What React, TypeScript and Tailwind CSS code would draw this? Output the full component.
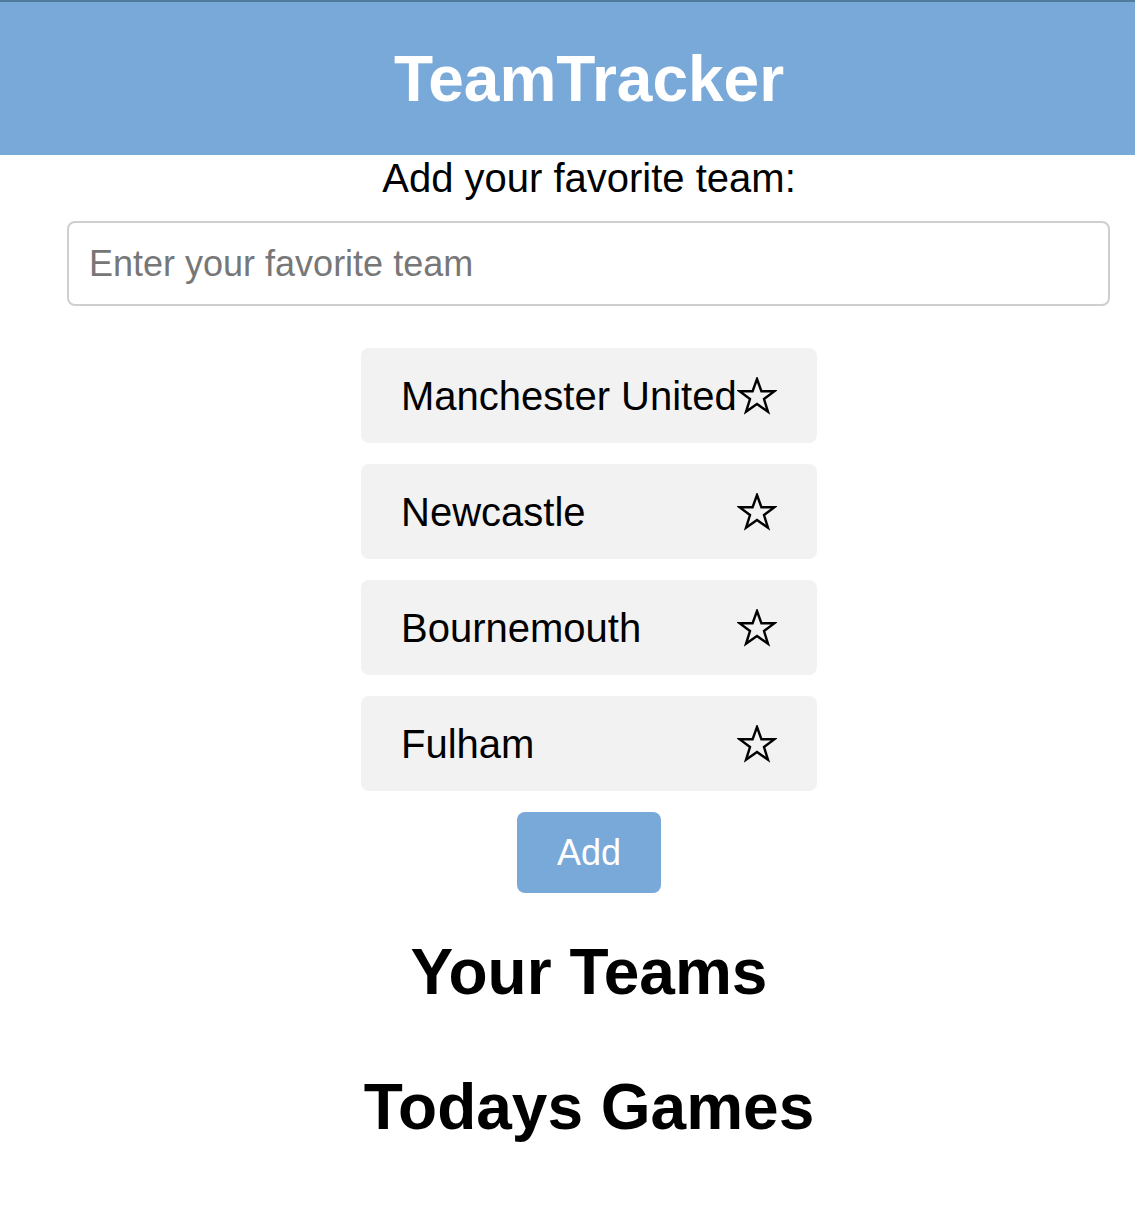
const teams = ['Manchester United', 'Newcastle', 'Bournemouth', 'Fulham'];

const StarIcon = () => (
  <svg width="40" height="38" viewBox="0 0 40 38" className="shrink-0">
    <polygon
      points="20,2 24.4,14.2 37.5,14.2 27,22 31,34.8 20,27 9,34.8 13,22 2.5,14.2 15.6,14.2"
      fill="none"
      stroke="#000"
      strokeWidth="2.4"
      strokeLinejoin="miter"
    />
  </svg>
);

const App = () => {
  return (
    <div className="w-full min-h-[1228px] overflow-hidden bg-white font-['Liberation_Sans',Arial,sans-serif] text-black">
      <div className="w-[1178px]">
        {/* Header */}
        <header className="h-[155px] bg-[#79a9d9] border-t-2 border-[#4f7c9c] flex items-start justify-center">
          <h1 className="mt-[41px] text-[64px] leading-[72px] font-bold text-white">TeamTracker</h1>
        </header>

        <main className="flex flex-col items-center">
          <p className="text-[40px] leading-[46px]">Add your favorite team:</p>

          <div className="self-start ml-[67px] mt-[20px] w-[1043px]">
            <input
              type="text"
              placeholder="Enter your favorite team"
              className="w-full h-[85px] px-[20px] rounded-[8px] border-2 border-[#cfcfcf] text-[36px] placeholder:text-[#777] outline-none"
            />
          </div>

          {/* Team list */}
          <ul className="mt-[42px] flex flex-col gap-[21px]">
            {teams.map((team) => (
              <li
                key={team}
                className="w-[456px] h-[95px] px-[40px] flex items-center justify-between rounded-[8px] bg-[#f2f2f2] text-[40px] leading-[46px]"
              >
                <span>{team}</span>
                <StarIcon />
              </li>
            ))}
          </ul>

          <button className="mt-[21px] w-[144px] h-[81px] rounded-[8px] bg-[#79a9d9] text-white text-[36px]">
            Add
          </button>

          <h2 className="mt-[43px] text-[64px] leading-[72px] font-bold">Your Teams</h2>
          <h2 className="mt-[63px] text-[64px] leading-[72px] font-bold">Todays Games</h2>
        </main>
      </div>
    </div>
  );
};

export default App;
